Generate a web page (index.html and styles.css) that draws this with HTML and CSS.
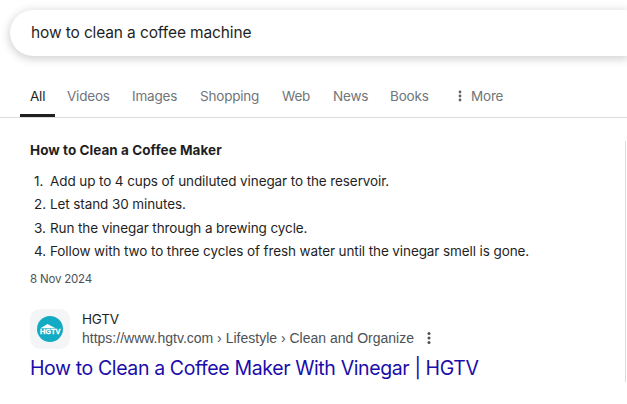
FILE: index.html
```html
<!DOCTYPE html>
<html lang="en">

<head>
    <meta charset="UTF-8">
    <meta name="viewport" content="width=device-width, initial-scale=1.0">
    <title>how to clean a coffee machine</title>
    <link rel="stylesheet" href="styles.css">
</head>

<body>
    <header class="header">
        <form class="search-form">
            <div class="search-text">how to clean a coffee machine</div>
        </form>

        <nav class="tabs">
            <a class="tab active">All</a>
            <a class="tab">Videos</a>
            <a class="tab">Images</a>
            <a class="tab">Shopping</a>
            <a class="tab">Web</a>
            <a class="tab">News</a>
            <a class="tab">Books</a>
            <a class="tab tab-more">
                <svg class="tab-dots" viewBox="0 0 4 12" width="4" height="12">
                    <circle cx="2" cy="2" r="1.4" />
                    <circle cx="2" cy="6" r="1.4" />
                    <circle cx="2" cy="10" r="1.4" />
                </svg>
                <span>More</span>
            </a>
        </nav>
    </header>

    <main class="results">
        <section class="snippet">
            <h2 class="snippet-title">How to Clean a Coffee Maker</h2>
            <ol class="steps">
                <li><span class="step-number">1.</span><span>Add up to 4 cups of undiluted vinegar to the reservoir.</span></li>
                <li><span class="step-number">2.</span><span>Let stand 30 minutes.</span></li>
                <li><span class="step-number">3.</span><span>Run the vinegar through a brewing cycle.</span></li>
                <li><span class="step-number">4.</span><span>Follow with two to three cycles of fresh water until the vinegar smell is gone.</span></li>
            </ol>
            <div class="snippet-date">8 Nov 2024</div>

            <div class="source">
                <div class="favicon">
                    <svg viewBox="0 0 26 26" width="26" height="26">
                        <circle class="logo-bg" cx="13" cy="13" r="13" />
                        <path class="logo-roof" d="M3.5 12.2 10.5 8l8 4.2z" />
                        <text class="logo-text" x="3" y="18.2" textLength="20.5" lengthAdjust="spacingAndGlyphs">HGTV</text>
                    </svg>
                </div>
                <div>
                    <div class="source-name">HGTV</div>
                    <div class="source-url">
                        <span>https://www.hgtv.com › Lifestyle › Clean and Organize</span>
                        <svg class="url-dots" viewBox="0 0 4 12" width="4" height="12">
                            <circle cx="2" cy="1.6" r="1.5" />
                            <circle cx="2" cy="6" r="1.5" />
                            <circle cx="2" cy="10.4" r="1.5" />
                        </svg>
                    </div>
                </div>
            </div>
            <h3 class="result-title"><a>How to Clean a Coffee Maker With Vinegar | HGTV</a></h3>
        </section>
    </main>
</body>

</html>
```

FILE: styles.css
```css
*,
*::before,
*::after {
    box-sizing: border-box;
    margin: 0;
    padding: 0;
}

:root {
    --text-color: #1f1f1f;
    --muted-color: #70757a;
    --border-color: #dadce0;
}

body {
    background-color: #fff;
    color: var(--text-color);
    font-family: 'Inter', sans-serif;
    font-size: 13.5px;
    letter-spacing: -0.2px;
    overflow: hidden;
    white-space: nowrap;
}

.header {
    height: 118px;
    padding-top: 10px;
    border-bottom: 1px solid var(--border-color);
}

.search-form {
    height: 46px;
    margin-left: 10px;
    padding-left: 21px;
    border-radius: 23px 0 0 23px;
    box-shadow: 0 2px 8px 1px rgba(64, 60, 67, .24);
}

.search-text {
    font-size: 15.5px;
    line-height: 46px;
    letter-spacing: -0.13px;
}

.tabs {
    display: grid;
    grid-template-columns: 37px 65px 68px 82px 51px 57px 61px 80px;
    margin: 19px 0 0 20px;
}

.tab {
    position: relative;
    height: 42px;
    padding-left: 10px;
    line-height: 42px;
    color: var(--muted-color);
}

.tab.active {
    color: var(--text-color);
}

.tab.active::after {
    content: '';
    position: absolute;
    left: 0;
    bottom: 0;
    width: 35px;
    height: 3px;
    background-color: var(--text-color);
}

.tab-more {
    display: flex;
    align-items: center;
    gap: 9px;
    padding-left: 17px;
}

.tab-dots {
    fill: #5f6368;
}

.results {
    height: 241px;
    margin-top: 23px;
    margin-right: 1px;
    padding-left: 30px;
    border-right: 1px solid var(--border-color);
}

.snippet-title {
    font-size: 13.5px;
    font-weight: 700;
    letter-spacing: 0.05px;
    line-height: 19px;
}

.steps {
    margin-top: 10px;
    list-style: none;
    letter-spacing: -0.1px;
}

.steps li {
    display: flex;
    height: 23.3px;
    line-height: 23px;
}

.step-number {
    width: 20px;
    padding-left: 4px;
}

.snippet-date {
    margin-top: 7px;
    font-size: 11.5px;
    line-height: 18px;
    color: #4d5156;
}

.source {
    display: flex;
    gap: 12px;
    margin-top: 21px;
}

.favicon {
    display: grid;
    place-items: center;
    width: 40px;
    height: 40px;
    border-radius: 10px;
    background-color: #f3f5f6;
}

.logo-bg {
    fill: #12abc3;
}

.logo-roof {
    fill: #fff;
}

.logo-text {
    fill: #fff;
    stroke: #fff;
    stroke-width: 0.3px;
    font: bold 8px 'Liberation Sans', sans-serif;
    letter-spacing: 0;
}

.source-name {
    line-height: 20px;
}

.source-url {
    display: flex;
    align-items: center;
    gap: 13px;
    font-family: 'Liberation Sans', sans-serif;
    font-size: 14px;
    letter-spacing: 0;
    line-height: 18px;
    color: #4d5156;
}

.url-dots {
    fill: #4d5156;
}

.result-title {
    margin-top: 5px;
    font-size: 19.5px;
    font-weight: 400;
    letter-spacing: -0.38px;
    line-height: 28px;
    color: #1a0dab;
}
```
